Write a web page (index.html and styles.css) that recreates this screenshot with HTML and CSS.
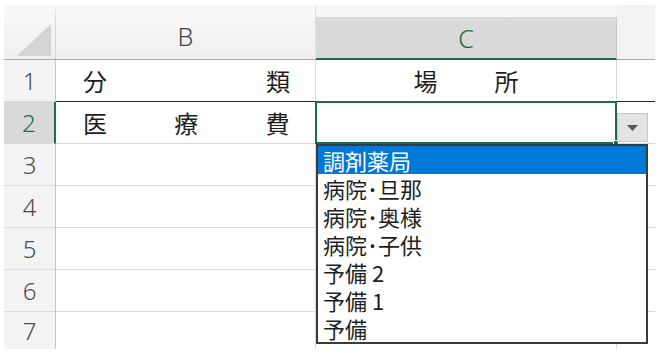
FILE: index.html
```html
<!DOCTYPE html>
<html lang="ja">
<head>
<meta charset="utf-8">
<link rel="stylesheet" href="styles.css">
</head>
<body>
<div class="sheet">
  <div class="hdr">
    <div class="corner">
      <svg class="tri" width="34" height="32" viewBox="0 0 34 32"><polygon points="34,0 34,32 0,32" fill="#d4d4d4"/></svg>
    </div>
    <div class="colh colb"><span>B</span></div>
    <div class="colh colc"><div class="selbox">C</div></div>
    <div class="colh cold"></div>
  </div>

  <div class="row r1">
    <div class="rh">1</div>
    <div class="cell cb dist"><span>分</span><span>類</span></div>
    <div class="cell cc center"><span>場</span><span>所</span></div>
    <div class="cell cd"></div>
  </div>
  <div class="row r2">
    <div class="rh sel">2</div>
    <div class="cell cb dist"><span>医</span><span>療</span><span>費</span></div>
    <div class="cell cc active"><i class="handle"></i></div>
    <div class="cell cd"></div>
  </div>
  <div class="row"><div class="rh">3</div><div class="cell cb"></div><div class="cell cc"></div><div class="cell cd"></div></div>
  <div class="row"><div class="rh">4</div><div class="cell cb"></div><div class="cell cc"></div><div class="cell cd"></div></div>
  <div class="row"><div class="rh">5</div><div class="cell cb"></div><div class="cell cc"></div><div class="cell cd"></div></div>
  <div class="row"><div class="rh">6</div><div class="cell cb"></div><div class="cell cc"></div><div class="cell cd"></div></div>
  <div class="row last"><div class="rh">7</div><div class="cell cb"></div><div class="cell cc"></div><div class="cell cd"></div></div>

  <div class="ddbtn"><svg width="11" height="6" viewBox="0 0 11 6"><polygon points="0,0 11,0 5.5,6" fill="#555"/></svg></div>
  <ul class="list">
    <li class="on">調剤薬局</li>
    <li>病院･旦那</li>
    <li>病院･奥様</li>
    <li>病院･子供</li>
    <li>予備 2</li>
    <li>予備 1</li>
    <li>予備</li>
  </ul>
</div>
</body>
</html>
```

FILE: styles.css
```css
* { box-sizing: border-box; }
html, body { margin: 0; padding: 0; background: #ffffff; }
body { font-family: "Noto Sans CJK JP", "Noto Sans", sans-serif; color: #1e1e1e; }

.sheet {
  position: relative;
  margin: 5px 0 0 4px;
  width: 651px;
}

.hdr {
  display: flex;
  height: 55px;
  background: linear-gradient(#f9f9f9, #efefef);
  border-bottom: 1px solid #a9a9a9;
}
.corner {
  width: 52px;
  position: relative;
  border-right: 1px solid #d6d6d6;
  border-top: 12px solid transparent;
}
.tri { position: absolute; right: 4px; bottom: 3px; }
.colh {
  display: flex;
  align-items: flex-end;
  justify-content: center;
  font-family: "Noto Sans", sans-serif;
  font-size: 25px;
  font-weight: 300;
  color: #444;
}
.colb { width: 260px; border-right: 1px solid #e0e0e0; }
.colb span { height: 43px; line-height: 40px; }
.colc { width: 301px; }
.selbox {
  width: 100%;
  height: 43px;
  background: #d9d9d9;
  border-bottom: 2px solid #1e6b48;
  border-right: 1px solid #c8c8c8;
  color: #1e6b48;
  text-align: center;
  line-height: 42px;
  margin-bottom: -1px;
}
.cold { width: 38px; background: #f3f3f3; }

.row {
  display: flex;
  height: 42px;
}
.row.last { height: 37px; }
.rh {
  width: 52px;
  background: #f3f3f3;
  border-right: 1px solid #c3c3c3;
  border-bottom: 1px solid #d9d9d9;
  display: flex;
  align-items: center;
  justify-content: center;
  font-family: "Noto Sans", sans-serif;
  font-size: 24px;
  font-weight: 300;
  color: #4a4a4a;
}
.rh.sel {
  background: #d9d9d9;
  color: #1e6b48;
  border-right: 2px solid #1e6b48;
}
.row.last .rh { border-bottom: none; }
.cell {
  border-bottom: 1px solid #d9d9d9;
  border-right: 1px solid #d9d9d9;
  display: flex;
  align-items: center;
  font-size: 24px;
}
.cb { width: 260px; }
.cc { width: 301px; }
.cd { width: 38px; border-right: none; }
.row.last .cell { border-bottom: none; }

.r1 .cell { border-bottom: 1px solid #262626; }
.dist { justify-content: space-between; padding: 0 25px 0 27px; }
.center { justify-content: center; gap: 57px; }

.active {
  position: relative;
  border: 2px solid #1e6b48;
  margin: -1px 0 0 -1px;
  width: 303px;
  height: 43px;
}
.handle {
  position: absolute;
  right: -4px;
  bottom: -4px;
  width: 6px;
  height: 6px;
  background: #1e6b48;
  border: 1px solid #fff;
}

.ddbtn {
  position: absolute;
  left: 613px;
  top: 108px;
  width: 31px;
  height: 29px;
  background: #e3e3e3;
  border: 1px solid #c6c6c6;
  display: flex;
  align-items: center;
  justify-content: center;
}

.list {
  position: absolute;
  left: 312px;
  top: 139px;
  width: 332px;
  margin: 0;
  padding: 0;
  list-style: none;
  background: #fff;
  border: 2px solid #3a3a3a;
}
.list li {
  height: 28px;
  line-height: 28px;
  padding-left: 5px;
  font-size: 22px;
  color: #1e1e1e;
}
.list li.on { background: #0078d7; color: #fff; }
```
